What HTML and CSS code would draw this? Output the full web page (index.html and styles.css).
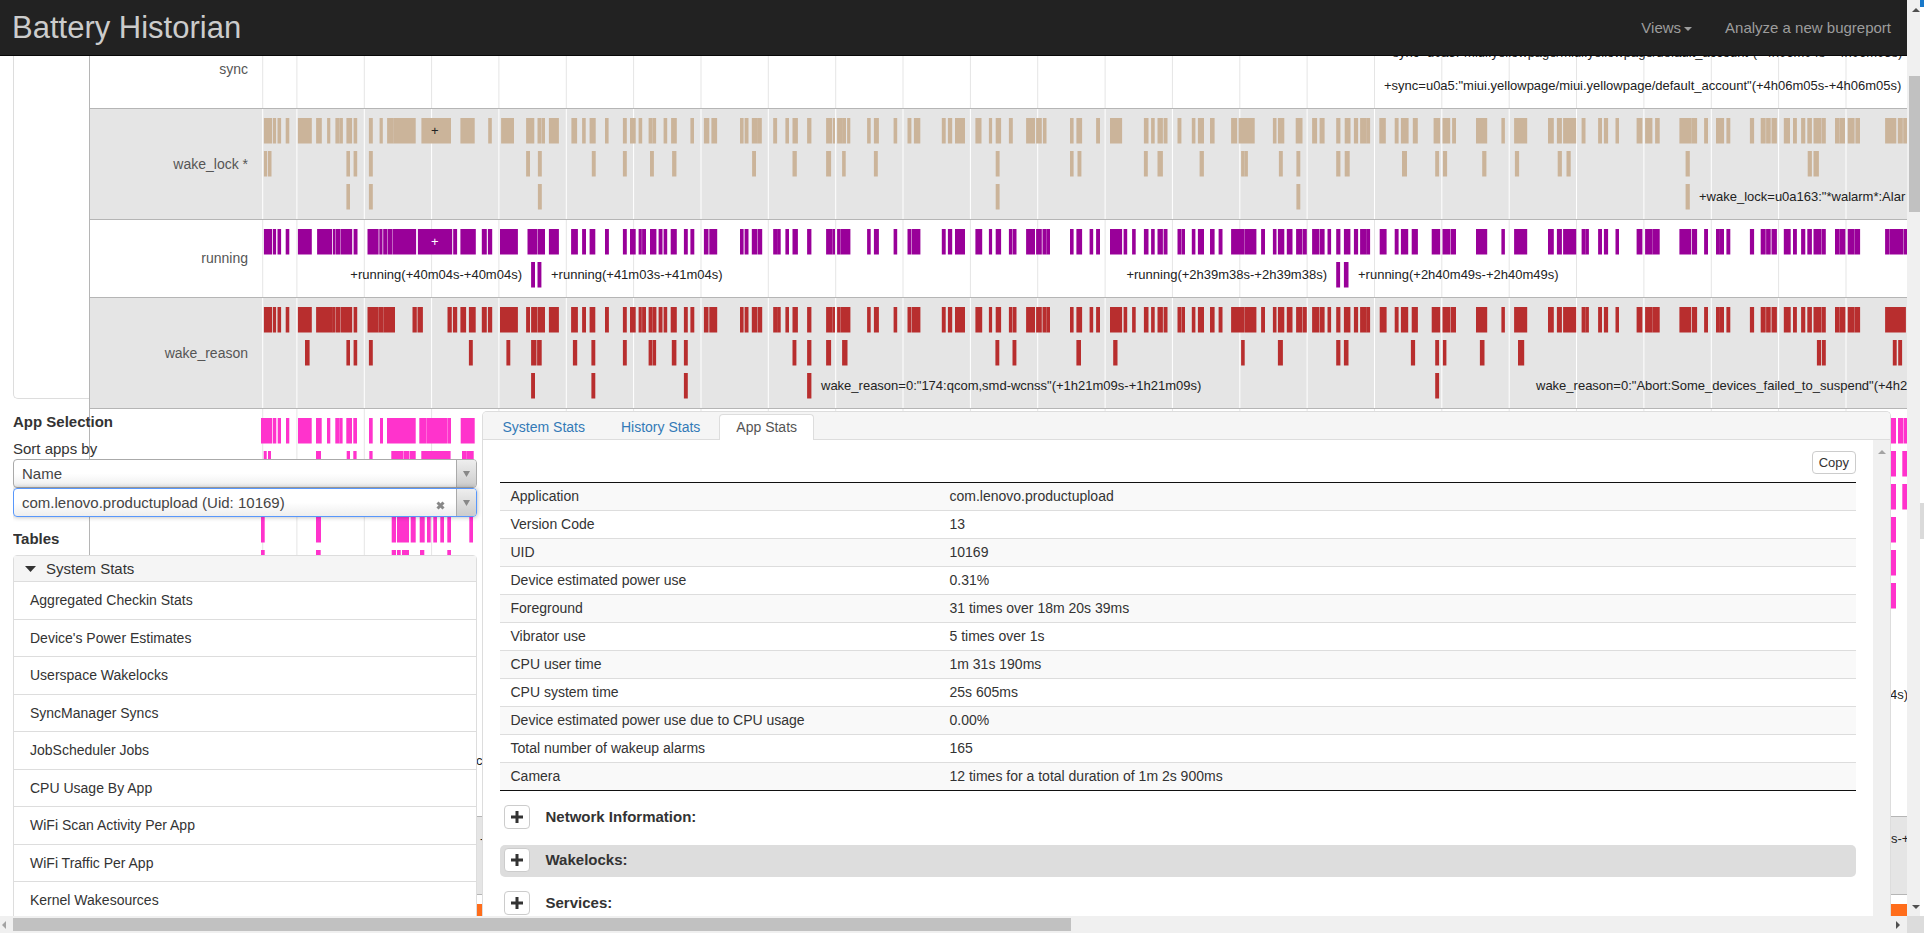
FILE: index.html
```html
<!DOCTYPE html>
<html lang="en">
<head>
<meta charset="utf-8">
<title>Battery Historian</title>
<link rel="stylesheet" href="styles.css">
</head>
<body>
<div class="window">
  <div class="viewport">
    <nav class="navbar">
      <a class="brand" href="#">Battery Historian</a>
      <div class="nav-links">
        <a href="#">Views<svg class="caret" width="8" height="4" viewBox="0 0 8 4"><path d="M0 0H8L4 4Z"/></svg></a>
        <a href="#">Analyze a new bugreport</a>
      </div>
    </nav>

    <main class="history">
      <div class="well"></div>
      <div class="chart" id="chart"></div>
    </main>

    <div class="dock">
      <aside class="sidebar">
        <h2>App Selection</h2>
        <label class="sort-label" for="sort">Sort apps by</label>
        <div class="picker">
          <select id="sort"><option>Name</option></select>
          <span class="picker-arrow"><svg width="7" height="6" viewBox="0 0 7 6"><path d="M0 0H7L3.5 6Z"/></svg></span>
        </div>
        <div class="picker picker-active">
          <select id="app" aria-label="Application"><option>com.lenovo.productupload (Uid: 10169)</option></select>
          <button class="picker-clear" type="button" aria-label="Clear"><svg width="9" height="9" viewBox="0 0 9 9"><path d="M1.500 1.500L7.500 7.500M7.500 1.500L1.500 7.500"/></svg></button>
          <span class="picker-arrow"><svg width="7" height="6" viewBox="0 0 7 6"><path d="M0 0H7L3.5 6Z"/></svg></span>
        </div>
        <h2 class="tables-title">Tables</h2>
        <div class="tables">
          <button class="tables-head" type="button"><svg width="11" height="6" viewBox="0 0 11 6"><path d="M0 0H11L5.500 6Z"/></svg>System Stats</button>
          <a href="#">Aggregated Checkin Stats</a>
          <a href="#">Device's Power Estimates</a>
          <a href="#">Userspace Wakelocks</a>
          <a href="#">SyncManager Syncs</a>
          <a href="#">JobScheduler Jobs</a>
          <a href="#">CPU Usage By App</a>
          <a href="#">WiFi Scan Activity Per App</a>
          <a href="#">WiFi Traffic Per App</a>
          <a href="#">Kernel Wakesources</a>
        </div>
      </aside>

      <section class="stats">
        <div class="tabs">
          <a href="#">System Stats</a>
          <a href="#">History Stats</a>
          <a class="active" href="#">App Stats</a>
        </div>
        <div class="stats-main">
          <div class="stats-body">
            <div class="tools"><button class="btn copy" type="button">Copy</button></div>
            <table>
              <tr><th scope="row">Application</th><td>com.lenovo.productupload</td></tr>
              <tr><th scope="row">Version Code</th><td>13</td></tr>
              <tr><th scope="row">UID</th><td>10169</td></tr>
              <tr><th scope="row">Device estimated power use</th><td>0.31%</td></tr>
              <tr><th scope="row">Foreground</th><td>31 times over 18m 20s 39ms</td></tr>
              <tr><th scope="row">Vibrator use</th><td>5 times over 1s</td></tr>
              <tr><th scope="row">CPU user time</th><td>1m 31s 190ms</td></tr>
              <tr><th scope="row">CPU system time</th><td>25s 605ms</td></tr>
              <tr><th scope="row">Device estimated power use due to CPU usage</th><td>0.00%</td></tr>
              <tr><th scope="row">Total number of wakeup alarms</th><td>165</td></tr>
              <tr><th scope="row">Camera</th><td>12 times for a total duration of 1m 2s 900ms</td></tr>
            </table>
            <div class="sections">
              <div class="section"><button class="btn plus" type="button" aria-label="Expand network information"><svg width="12" height="12" viewBox="0 0 12 12"><path d="M6 0V12M0 6H12"/></svg></button><h3>Network Information:</h3></div>
              <div class="section hovered"><button class="btn plus" type="button" aria-label="Expand wakelocks"><svg width="12" height="12" viewBox="0 0 12 12"><path d="M6 0V12M0 6H12"/></svg></button><h3>Wakelocks:</h3></div>
              <div class="section"><button class="btn plus" type="button" aria-label="Expand services"><svg width="12" height="12" viewBox="0 0 12 12"><path d="M6 0V12M0 6H12"/></svg></button><h3>Services:</h3></div>
            </div>
          </div>
          <div class="inner-scroll"><svg width="8" height="4" viewBox="0 0 8 4"><path d="M0 4H8L4 0Z"/></svg></div>
        </div>
      </section>
    </div>
  </div>

  <div class="vscroll">
    <svg width="8" height="4" viewBox="0 0 8 4"><path d="M0 4H8L4 0Z"/></svg>
    <div class="vtrack"><div class="vthumb"></div></div>
    <svg width="8" height="4" viewBox="0 0 8 4"><path d="M0 0H8L4 4Z"/></svg>
  </div>
  <div class="edge"><div class="edge-cap"></div><div class="edge-mark"></div></div>
  <div class="hscroll">
    <svg class="dim" width="4" height="8" viewBox="0 0 4 8"><path d="M4 0V8L0 4Z"/></svg>
    <div class="htrack"><div class="hthumb"></div></div>
    <svg width="4" height="8" viewBox="0 0 4 8"><path d="M0 0V8L4 4Z"/></svg>
  </div>
  <div class="corner"></div>
</div>
<script src="chart.js"></script>
</body>
</html>
```

FILE: styles.css
```css
* { box-sizing: border-box; }
body {
  margin: 0;
  background: #fff;
  color: #333;
  font: 14px/20px "Liberation Sans", Arial, sans-serif;
}
a { color: inherit; text-decoration: none; }
h2, h3 { margin: 0; font-size: 15px; line-height: 21px; font-weight: bold; }
button, select { font: inherit; color: inherit; margin: 0; }

.window {
  display: grid;
  grid-template-columns: minmax(0, 1fr) 13px 4px;
  grid-template-rows: minmax(0, 1fr) 17px;
  height: 100vh;
}
.viewport { position: relative; overflow: hidden; }

.navbar {
  position: absolute;
  inset: 0 0 auto 0;
  z-index: 2;
  display: flex;
  align-items: center;
  justify-content: space-between;
  height: 56px;
  padding: 0 16px 0 12px;
  background: #222;
  border-bottom: 1px solid #080808;
}
.brand { color: #ccc; font-size: 31px; line-height: 40px; }
.nav-links { display: flex; gap: 33px; color: #9d9d9d; font-size: 15px; }
.caret { margin-left: 3px; vertical-align: middle; fill: #9d9d9d; }

.history { display: flex; align-items: flex-start; padding: 30px 0 0 13px; }
.well {
  flex: 0 0 76px;
  height: 369px;
  border: 1px solid #ddd;
  border-width: 0 0 1px 1px;
  border-radius: 0 0 0 5px;
}
.chart { flex: 1; min-width: 0; border-left: 1px solid #b5b5b5; background: #fff; }
.row {
  display: grid;
  grid-template-columns: 172px minmax(0, 1fr);
  align-items: center;
  border-top: 1px solid #b5b5b5;
}
.row.shaded { background: #e5e5e5; }
.row-name { padding: 0 14px 1px 0; text-align: right; color: #555; }
.lanes { display: block; width: 100%; overflow: visible; font-size: 13px; fill: #222; }
.grid-line { stroke: #e5e5e5; }
.shaded .grid-line { stroke: #fff; }
.on-dark { fill: #fff; }
.tan { fill: #cbb49a; }
.purple { fill: #909; }
.red { fill: #b82e2e; }
.pink { fill: #ff33cc; }
.orange { fill: #ff6d1b; }

.dock {
  position: absolute;
  inset: auto 0 0 0;
  display: grid;
  grid-template-columns: calc(25% - 1px) minmax(0, 1fr);
  height: 505px;
  padding: 0 16px 0 13px;
}
.sidebar { padding-right: 5px; overflow: hidden; }
.sort-label { display: block; margin-top: 6px; font-size: 15px; line-height: 21px; }
.picker {
  display: flex;
  position: relative;
  height: 29px;
  border: 1px solid #aaa;
  border-radius: 4px;
  background: linear-gradient(#fff 50%, #eee);
  overflow: hidden;
}
.picker select {
  flex: 1;
  padding: 0 8px;
  border: 0;
  background: transparent;
  appearance: none;
  color: #444;
  font-size: 15px;
  outline: 0;
}
.picker-active { border-color: #5897fb; box-shadow: 0 0 5px rgba(0, 0, 0, .3); }
.picker-clear {
  align-self: center;
  display: flex;
  padding: 5px 11px 0 0;
  border: 0;
  background: transparent;
}
.picker-clear path { stroke: #888; stroke-width: 3; }
.picker-arrow {
  display: flex;
  align-items: center;
  justify-content: center;
  width: 20px;
  border-left: 1px solid #aaa;
  background: linear-gradient(#eee, #ccc);
}
.picker-arrow path { fill: #888; }
.tables-title { margin: 11px 0 6px; }
.tables { background: #fff; border: 1px solid #ddd; border-radius: 4px 4px 0 0; }
.tables-head {
  display: flex;
  align-items: center;
  gap: 10px;
  width: 100%;
  height: 25px;
  padding: 0 11px;
  border: 0;
  background: #f5f5f5;
  font-size: 15px;
}
.tables-head path { fill: #333; }
.tables a {
  display: block;
  padding: 10px 16px 9px;
  border-top: 1px solid #ddd;
  line-height: 1.25;
}

.stats {
  display: flex;
  flex-direction: column;
  min-width: 0;
  background: #fff;
  border: 1px solid #ddd;
  border-bottom: 0;
  border-radius: 5px 5px 0 0;
  overflow: hidden;
}
.tabs {
  display: flex;
  align-items: flex-end;
  gap: 2px;
  flex: none;
  height: 28px;
  padding-left: 3px;
  background: #f5f5f5;
  box-shadow: inset 0 -1px #ddd;
  color: #337ab7;
}
.tabs a { height: 26px; padding: 0 16px; border: 1px solid transparent; border-bottom: 0; line-height: 25px; }
.tabs .active { background: #fff; border-color: #ddd; border-radius: 4px 4px 0 0; color: #555; }
.stats-main { display: flex; flex: 1; min-height: 0; }
.stats-body { flex: 1; min-width: 0; padding: 11px 17px 0; overflow: hidden; }
.inner-scroll { flex: 0 0 17px; padding: 7px 0; background: #f0f0f0; text-align: center; line-height: 4px; }
.inner-scroll path { fill: #a3a3a3; }
.tools { display: flex; justify-content: flex-end; margin-bottom: 8px; }
.btn { border: 1px solid #ccc; border-radius: 4px; background: #fff; }
.copy { height: 23px; padding: 0 6px; font-size: 13px; line-height: 20px; }
table { width: 100%; border-collapse: collapse; border: 1px solid #111; border-width: 1px 0; }
tr:nth-child(odd) { background: #f9f9f9; }
tr + tr { border-top: 1px solid #ddd; }
th, td { height: 28px; padding: 0 11px 2px; text-align: left; font-weight: normal; line-height: 20px; }
th { width: 439px; }
.sections { display: grid; gap: 11px; padding-top: 11px; }
.section { display: flex; align-items: center; gap: 16px; height: 32px; padding: 0 4px 3px; border-radius: 5px; }
.hovered { background: #ddd; }
.plus { display: flex; align-items: center; justify-content: center; width: 26px; height: 24px; padding: 0; }
.plus path { stroke: #333; stroke-width: 3; }

.vscroll { display: flex; flex-direction: column; align-items: center; padding: 8px 0 7px 4px; background: #f0f0f0; }
.vscroll path, .hscroll path { fill: #505050; }
.vtrack { flex: 1; width: 100%; padding-top: 64px; }
.vthumb { height: 136px; margin-left: -2px; background: #c1c1c1; }
.edge { display: flex; flex-direction: column; }
.edge-cap { height: 7px; background: #1979ca; }
.edge-mark { height: 36px; margin-top: 496px; background: #dadada; }
.hscroll { display: flex; align-items: center; padding: 0 7px 0 2px; background: #f0f0f0; }
.hscroll .dim path { fill: #a3a3a3; }
.htrack { flex: 1; padding: 0 7px; }
.hthumb { width: 56.4%; height: 13px; background: #c1c1c1; }
.corner { grid-column: 2 / 4; background: #dcdcdc; }
```

FILE: chart.js
```js
// Event timeline. Events are logged in windows; each window has an origin
// and a resolution (units per pixel), and lists its bars as start-end pairs.
const PLOT_LEFT = 262;
const LANE = 33;
const WINDOWS = { a: [240, 2.8], b: [780, 2.8], c: [1320, 2.596], d: [0, 3], e: [1400, 2.992] };

const LATE_A = "1299-1312 1314-1336 1400-1410 1413-1424 1433-1449 1450-1462 1493-1504 1504-1514 1527-1537 1547-1562";
const RUN_B = "76-88 129-147 147-154 160-169 169-197 244-254 263-277 318-328 357-368 369-393 453-464 470-482 490-518 547-566 585-594 604-619 641-651 652-662 689-714 717-733 735-746 746-756 812-822 830-846 867-877 885-896 924-958 962-972 986-996 1019-1032 1039-1049 1057-1072 1074-1085 1113-1123 1124-1134 1153-1163 1170-1187 1204-1217 1228-1239 1263-1299 1300-1334 1347-1358 1380-1390 1394-1412 1419-1435 1445-1463 1464-1475 1490-1510 1511-1525 1533-1543";
const RUN_C = "42-53 62-79 88-99 104-120 120-130 155-173 194-204 210-229 238-254 290-312 318-338 339-353 405-434 471-480 504-538 592-607 615-628 631-665 679-689 689-698 722-732 737-748 767-776 822-837 844-863 863-882 933-963 965-979 997-1007 1028-1038 1038-1049 1055-1065 1116-1127 1144-1157 1158-1170 1172-1186 1204-1222 1228-1238 1249-1260 1265-1277 1281-1302 1303-1313 1337-1349 1349-1364 1370-1388 1388-1402";

const ROWS = [
  { name: "sync", lanes: [{}, {}], texts: [
    [1385, 0, '+sync=u0a5:"miui.yellowpage/miui.yellowpage/default_account"(+4h06m04s-+4h06m05s)'],
    [1384, 1, '+sync=u0a5:"miui.yellowpage/miui.yellowpage/default_account"(+4h06m05s-+4h06m05s)'] ] },
  { name: "wake_lock *", shaded: true, color: "tan", lanes: [
    { a: "67-90 92-101 105-115 128-138 162-201 213-229 244-253 267-278 278-288 298-314 318-328 361-372 391-400 412-429 429-492 508-591 617-657 695-705 731-767 801-824 833-843 844-854 865-893 928-944 958-968 979-996 1022-1032 1072-1083 1092-1108 1116-1126 1144-1155 1155-1165 1186-1196 1207-1223 1261-1271 1299-1314 1320-1336 1400-1410 1413-1424 1433-1450 1450-1461 1493-1504 1527-1537 1547-1562",
      b: "76-88 129-146 148-154 160-174 174-185 188-197 244-254 263-277 318-328 357-368 375-393 453-464 470-482 490-518 547-564 585-594 604-619 641-652 689-714 717-733 736-746 812-822 830-846 885-896 924-958 1019-1032 1039-1049 1057-1072 1074-1085 1113-1124 1153-1163 1170-1187 1204-1217 1263-1280 1284-1329 1380-1390 1394-1412 1444-1463 1490-1504 1511-1525",
      c: "42-53 64-79 88-99 104-120 120-130 154-171 194-204 210-230 241-254 295-312 318-338 343-353 405-434 471-480 504-538 592-607 615-628 631-665 679-689 722-732 737-748 767-776 822-837 844-863 870-882 933-964 964-979 997-1007 1028-1049 1055-1065 1116-1127 1144-1157 1158-1170 1172-1186 1204-1220 1228-1238 1249-1260 1265-1277 1281-1302 1303-1313 1337-1349 1349-1363 1370-1388 1390-1402 1467-1496 1500-1513 1514-1530" },
    { a: "67-76 78-88 298-308 318-328 361-372 801-812 834-845 985-996 1072-1083 1148-1159 1210-1222 1434-1445 1547-1559",
      b: "129-143 174-184 263-274 604-615 812-822 833-844 1019-1030 1057-1072 1175-1187 1291-1300 1300-1310 1397-1408 1446-1457",
      c: "42-53 64-77 213-226 299-309 319-330 421-432 506-517 617-628 640-651 949-960 1266-1277 1281-1295" },
    { a: "298-308 361-372 834-845", b: "604-615 1446-1457", c: "949-960" } ],
    texts: [[431, 0, "+"], [1699, 2, '+wake_lock=u0a163:"*walarm*:Alar']] },
  { name: "running", color: "purple", lanes: [
    { a: "67-90 92-101 105-115 128-138 162-201 216-258 260-266 267-280 281-314 318-329 357-388 390-399 401-413 414-426 427-493 498-594 597-608 617-660 677-691 694-706 728-778 805-832 833-854 865-893 927-946 958-969 979-995 1022-1033 1072-1083 1092-1108 1116-1125 1126-1137 1148-1166 1172-1183 1186-1196 1206-1223 1243-1254 1261-1272 " + LATE_A,
      b: RUN_B, c: RUN_C + " 1467-1477 1478-1515 1516-1530" },
    { a: "815-826 833-844", c: "42-52 62-74" } ],
    texts: [[431, 0, "+", "on-dark"], [522, 1, "+running(+40m04s-+40m04s)", "", "end"], [551, 1, "+running(+41m03s-+41m04s)"],
      [1327, 1, "+running(+2h39m38s-+2h39m38s)", "", "end"], [1358, 1, "+running(+2h40m49s-+2h40m49s)"]] },
  { name: "wake_reason", shaded: true, color: "red", lanes: [
    { a: "67-90 92-101 105-115 128-138 162-201 213-258 258-266 267-280 281-314 318-328 357-388 388-402 402-434 483-495 497-512 581-593 596-608 617-633 641-660 677-691 694-706 728-778 801-812 815-832 833-854 865-893 927-946 958-969 979-995 1022-1033 1072-1083 1092-1108 1116-1125 1126-1137 1144-1155 1155-1166 1172-1183 1186-1196 1206-1223 1243-1254 1261-1272 " + LATE_A,
      b: RUN_B, c: RUN_C + " 1467-1477 1477-1521" },
    { a: "182-195 298-308 318-328 361-372 641-652 746-757 815-830 832-845 932-944 984-995 1072-1083 1144-1154 1155-1165 1209-1222 1243-1254 1547-1558",
      b: "76-88 129-143 174-189 603-614 651-662 830-843 933-945 1291-1301 1394-1408",
      c: "42-53 62-74 236-247 299-309 319-328 415-427 514-530 1290-1301 1303-1313 1487-1497 1501-1511" },
    { a: "815-826 984-995 1243-1254", b: "76-88", c: "299-309" } ],
    texts: [[821, 2, 'wake_reason=0:"174:qcom,smd-wcnss"(+1h21m09s-+1h21m09s)'],
      [1536, 2, 'wake_reason=0:"Abort:Some_devices_failed_to_suspend"(+4h2']] },
  { name: "", color: "pink", lanes: [
    { d: "783-817 819-829 833-843 858-868 894-935 948-965 981-991 1006-1018 1018-1028 1039-1056 1060-1071 1107-1118 1140-1149 1161-1176 1176-1247 1258-1280 1280-1341 1342-1353 1382-1392 1392-1424",
      e: "1460-1484 1490-1506 1507-1530" },
    { d: "791-800 804-813 948-963 1040-1050 1060-1070 1108-1118 1174-1211 1212-1228 1229-1247 1264-1352 1386-1400 1400-1421", e: "1460-1484 1503-1530" },
    { e: "1460-1484 1503-1530" },
    { d: "783-794 948-963 1175-1188 1191-1227 1232-1247 1259-1274 1281-1292 1300-1311 1321-1332 1342-1353 1408-1419", e: "1460-1484" },
    { d: "783-794 948-962 1175-1188 1191-1202 1206-1227 1260-1273 1342-1353", e: "1460-1484" },
    { e: "1460-1484" }, {}, {}, {}, {}, {}, {} ],
    texts: [[1890, 8, "4s)"], [476, 10, "c("]] },
  { name: "", shaded: true, lanes: [{}, {}], texts: [[1891, 0, "s-+"], [480, 0, "-"]] },
  { name: "", color: "orange", lanes: [{ d: "1430-1460", e: "1460-1530" }] }
];

const NS = "http://www.w3.org/2000/svg";
function add(parent, tag, attrs) {
  const node = document.createElementNS(NS, tag);
  for (const key in attrs) node.setAttribute(key, attrs[key]);
  parent.appendChild(node);
  return node;
}

const chart = document.getElementById("chart");
for (const row of ROWS) {
  const height = LANE * row.lanes.length + 11;
  const box = document.createElement("div");
  box.className = row.shaded ? "row shaded" : "row";
  const name = document.createElement("div");
  name.className = "row-name";
  name.textContent = row.name;
  box.appendChild(name);

  const svg = add(box, "svg", { class: "lanes", height });
  add(svg, "line", { class: "grid-line", x1: 0.7, x2: 0.7, y1: 0, y2: height });
  // One grid line for every ten minutes.
  for (let i = 0; i < 24; i++) {
    const x = (34.9 + i * 67.35).toFixed(1);
    add(svg, "line", { class: "grid-line", x1: x, x2: x, y1: 0, y2: height });
  }
  row.lanes.forEach((lane, n) => {
    for (const key in lane) {
      const [origin, unit] = WINDOWS[key];
      for (const bar of lane[key].split(" ")) {
        const [from, to] = bar.split("-").map(v => origin - PLOT_LEFT + v / unit);
        add(svg, "rect", { class: row.color, x: from.toFixed(1), y: 9 + n * LANE, width: (to - from).toFixed(1), height: 25.5 });
      }
    }
  });
  for (const [x, lane, text, cls, anchor] of row.texts || []) {
    add(svg, "text", { x: x - PLOT_LEFT, y: 26 + lane * LANE, class: cls || "", "text-anchor": anchor || "start" }).textContent = text;
  }
  chart.appendChild(box);
}
```
